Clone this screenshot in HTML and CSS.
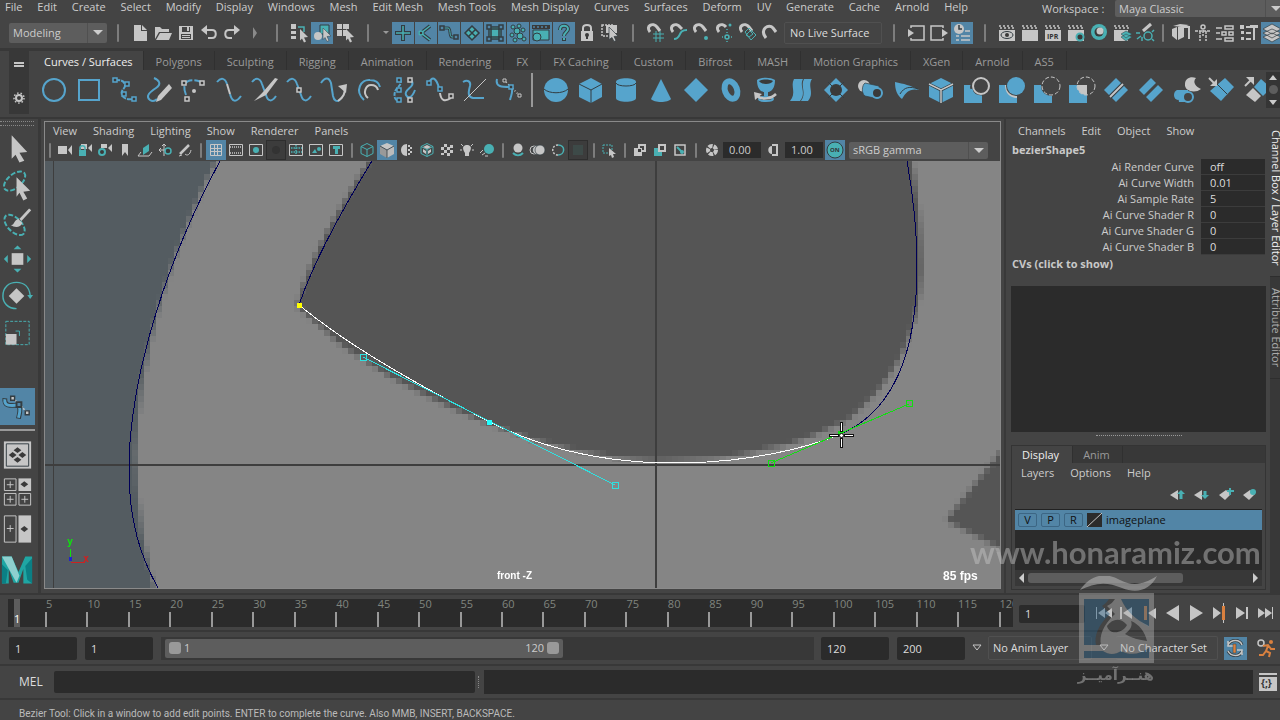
FILE: index.html
```html
<!DOCTYPE html>
<html lang="en">
<head>
  <meta charset="UTF-8">
  <meta name="viewport" content="width=device-width, initial-scale=1.0">
  <title>Maya Classic</title>
  <link rel="stylesheet" href="styles.css">
</head>
<body>

<header class="menubar">
  <nav class="menus">
    <a href="#">File</a><a href="#">Edit</a><a href="#">Create</a><a href="#">Select</a><a href="#">Modify</a><a href="#">Display</a><a href="#">Windows</a><a href="#">Mesh</a><a href="#">Edit Mesh</a><a href="#">Mesh Tools</a><a href="#">Mesh Display</a><a href="#">Curves</a><a href="#">Surfaces</a><a href="#">Deform</a><a href="#">UV</a><a href="#">Generate</a><a href="#">Cache</a><a href="#">Arnold</a><a href="#">Help</a>
  </nav>
  <label for="workspace">Workspace :</label>
  <div class="drop workspace"><select id="workspace"><option>Maya Classic</option></select><span class="caret"></span></div>
</header>

<!-- status line -->
<div class="statusline">
  <div class="drop mode"><select aria-label="Menu set"><option>Modeling</option></select><span class="caret"></span></div>
  <span class="sep"></span>
  <button aria-label="New scene"><svg viewBox="0 0 22 22"><path class="fw" d="M5 3h7v6h6v10H5zM13 3l5 5h-5z"/></svg></button>
  <button aria-label="Open scene"><svg viewBox="0 0 22 22"><path class="fw" d="M3 17V5h5l2 2h7v3H7zM4 18l4-7h12l-3 7z"/></svg></button>
  <button aria-label="Save scene"><svg viewBox="0 0 22 22"><path class="fw" fill-rule="evenodd" d="M4 4h14v14H4zM7 5v5h8V5zM6 12v5h10v-5z"/><path class="fw" d="M12 5h2v4h-2zM7 13h8v1H7zM7 15h8v1H7z"/></svg></button>
  <button aria-label="Undo"><svg viewBox="0 0 22 22"><path class="sw" stroke-width="2" d="M6 8h8c5 0 5 8 0 8h-4"/><path class="fw" d="M3 8l6-5v10z"/></svg></button>
  <button aria-label="Redo"><svg viewBox="0 0 22 22"><path class="sw" stroke-width="2" d="M16 8H8c-5 0-5 8 0 8h3"/><path class="fw" d="M19 8l-6-5v10z"/></svg></button>
  <span class="sep arrow"></span>
  <span class="sep"></span>
  <button aria-label="Select by hierarchy"><svg viewBox="0 0 22 22"><path class="fw" d="M3 2h5v5H3zM3 9h5v3H3zM3 14h5v3H3z"/><path class="st" d="M10 5h6v5"/><path class="fw" d="M12 7l8 8-4 .5 2 4-2 1-2-4-2 2z"/></svg></button>
  <button class="on" aria-label="Select by object"><svg viewBox="0 0 22 22"><path class="ft sd" stroke-width="1" d="M9 3h9v9H9z"/><circle class="fw" cx="7" cy="14" r="4"/><path class="fw sd" stroke-width=".5" d="M12 6l8 8-4 .5 2 4-2 1-2-4-2 2z"/></svg></button>
  <button aria-label="Select by component"><svg viewBox="0 0 22 22"><path class="fw" d="M3 2h5v5H3zM9 2h6v5H9zM3 8h5v6H3zM9 8h3v6H9z"/><path class="fw" d="M12 7l8 8-4 .5 2 4-2 1-2-4-2 2z"/></svg></button>
  <span class="sep"></span>
  <span class="tiny"></span>
  <button class="on" aria-label="Handles mask"><svg viewBox="0 0 22 22"><path class="sd" stroke-width="4" d="M11 3v16M3 11h16"/><path class="st" d="M11 4v14M4 11h14"/></svg></button>
  <button class="on" aria-label="Joints mask"><svg viewBox="0 0 22 22"><path class="sd" stroke-width="3.5" d="M15 4L6 11l9 7"/><path class="st" d="M15 4L6 11l9 7"/><circle class="fd st" cx="6" cy="11" r="2"/></svg></button>
  <button class="on" aria-label="Curves mask"><svg viewBox="0 0 22 22"><path class="sd" stroke-width="3" d="M5 6h5c3 0 1 9 4 9h3"/><path class="st" stroke-width="1" d="M5 6h5c3 0 1 9 4 9h3"/><path class="fa sd" d="M2 4h4v4H2zM16 13h4v4h-4z"/></svg></button>
  <button class="on" aria-label="Surfaces mask"><svg viewBox="0 0 22 22"><path class="ft sd" d="M11 4l7 7-7 7-7-7z"/><path class="sd" d="M7 7l8 8M15 7l-8 8"/></svg></button>
  <button class="on" aria-label="Deformations mask"><svg viewBox="0 0 22 22"><path class="ft sd" d="M7 7h8v8H7zM5 5h12v12H5z"/><path class="fa sd" d="M3 3h4v4H3zM15 3h4v4h-4zM3 15h4v4H3zM15 15h4v4h-4z"/></svg></button>
  <button class="on" aria-label="Dynamics mask"><svg viewBox="0 0 22 22"><g class="ft sd" stroke-width="1"><circle cx="6" cy="5" r="2"/><circle cx="12" cy="4" r="2"/><circle cx="16" cy="8" r="2"/><circle cx="10" cy="9" r="3"/><circle cx="5" cy="13" r="2"/><circle cx="13" cy="14" r="3"/><circle cx="17" cy="17" r="2"/><circle cx="8" cy="18" r="2"/></g></svg></button>
  <button class="on" aria-label="Rendering mask"><svg viewBox="0 0 22 22"><path class="ft sd" stroke-width="1" d="M3 8h16v10H3z"/><path class="fd" d="M2 3h18v4H2z"/><path class="sa" stroke-dasharray="2 2" d="M3 5h16"/><circle class="ft sd" stroke-width="1" cx="7" cy="15" r="4"/></svg></button>
  <button class="on" aria-label="Miscellaneous mask"><svg viewBox="0 0 22 22"><path class="sd" stroke-width="4" d="M7 8c0-6 8-5 8-1 0 3-4 3-4 7M11 16v3"/><path class="st" stroke-width="2" d="M7 8c0-6 8-5 8-1 0 3-4 3-4 7M11 16v2"/></svg></button>
  <button aria-label="Lock selection"><svg viewBox="0 0 22 22"><path class="sw" stroke-width="2" d="M7 10V6c0-4 8-4 8 0v4"/><path class="fw" d="M5 9h12v10H5z"/><circle class="fd" cx="11" cy="13" r="2"/><path class="fd" d="M10 13h2v4h-2z"/></svg></button>
  <button aria-label="Highlight selection"><svg viewBox="0 0 22 22"><path class="sw" stroke-dasharray="2 1" d="M3 3h11v11H3z"/><path class="fw" d="M7 3h11v8H7z"/><path class="fw sd" stroke-width=".7" d="M10 5l9 9-4 .5 2 4-2 1-2-4-3 2z"/></svg></button>
  <span class="sep"></span>
  <button aria-label="Snap to grids"><svg viewBox="0 0 22 22"><path class="sw" stroke-width="3" d="M6 10C1 4 9 0 13 5l3 4"/><path class="st" stroke-width="1" d="M9 12h11M9 16h11M12 9v11M16 9v11"/></svg></button>
  <button aria-label="Snap to curves"><svg viewBox="0 0 22 22"><path class="sw" stroke-width="3" d="M6 10C1 4 9 0 13 5l2 2"/><path class="st" stroke-width="2" d="M7 17c8 0 3-9 13-9"/></svg></button>
  <button aria-label="Snap to points"><svg viewBox="0 0 22 22"><path class="sw" stroke-width="3" d="M6 10C1 4 9 0 13 5l3 4"/><circle class="ft" cx="16" cy="16" r="2"/></svg></button>
  <button aria-label="Snap to projected center"><svg viewBox="0 0 22 22"><path class="sw" stroke-width="3" d="M6 10C1 4 9 0 13 5"/><circle class="st" cx="14" cy="15" r="2"/><circle class="ft" cx="17" cy="3" r="1.5"/><path class="st" stroke-dasharray="1 2" d="M14 7v14M9 15h11"/></svg></button>
  <button aria-label="Snap to view planes"><svg viewBox="0 0 22 22"><path class="sw" stroke-width="3" d="M6 10C1 4 9 0 13 5l3 4"/><path class="st" stroke-width="1" d="M9 10l4-4 7 7-5 5zM10 13l4-4 3 3-4 3z"/></svg></button>
  <button aria-label="Make live"><svg viewBox="0 0 22 22"><path class="sw" stroke-width="3" d="M7 16C0 7 10 1 14 6l3 4"/></svg></button>
  <input class="live" type="text" aria-label="Live surface" value="No Live Surface">
  <span class="sep"></span>
  <button aria-label="Inputs"><svg viewBox="0 0 22 22"><path class="sw" d="M6 6V4h13v14H6v-2"/><path class="fw" d="M3 7l6 4-6 4z"/></svg></button>
  <button aria-label="Outputs"><svg viewBox="0 0 22 22"><path class="sw" d="M15 6V4H3v14h12v-2"/><path class="fw" d="M14 7l6 4-6 4z"/></svg></button>
  <button class="on" aria-label="Construction history"><svg viewBox="0 0 22 22"><circle class="fw" cx="8" cy="7" r="5"/><path class="sd" d="M8 3v4h3"/><path class="sw" d="M14 9h5M5 14h3M10 14h9M5 18h3M10 18h9"/></svg></button>
  <span class="sep"></span>
  <button aria-label="Render view"><svg viewBox="0 0 22 22"><path class="sw" stroke-dasharray="2 2" d="M3 4h16M4 6h15"/><path class="fw" d="M3 8h16v11H3z"/><ellipse class="sd" stroke-width="1" cx="11" cy="13" rx="6" ry="3.5"/><circle class="fd" cx="11" cy="13" r="2"/></svg></button>
  <button aria-label="Render current frame"><svg viewBox="0 0 22 22"><path class="sw" stroke-dasharray="2 2" d="M3 4h16M4 6h15"/><path class="fw" d="M3 8h16v11H3z"/></svg></button>
  <button aria-label="IPR render"><svg viewBox="0 0 22 22"><path class="sw" stroke-dasharray="2 2" d="M3 4h16M4 6h15"/><path class="fw" d="M3 8h16v11H3z"/><text class="ipr" x="5" y="17">IPR</text></svg></button>
  <button aria-label="Render settings"><svg viewBox="0 0 22 22"><path class="sw" stroke-dasharray="2 2" d="M3 4h16M4 6h15"/><path class="fw" d="M3 8h16v11H3z"/><circle class="fd st" stroke-width="2" cx="15" cy="15" r="3.5"/></svg></button>
  <button aria-label="Hypershade"><svg viewBox="0 0 22 22"><circle class="ft" cx="11" cy="10" r="8"/><circle class="fd" cx="11" cy="10" r="4.5"/><circle class="fw" cx="12" cy="9" r="3.5"/></svg></button>
  <button aria-label="Render setup"><svg viewBox="0 0 22 22"><path class="sw" stroke-dasharray="2 2" d="M3 4h16M4 6h15"/><path class="fw" d="M3 8h14v11H3z"/><path class="ft sd" stroke-width=".5" d="M10 15l5-3 6 3-6 4zM10 12l5-3 6 3-6 4z"/></svg></button>
  <button aria-label="Light editor"><svg viewBox="0 0 22 22"><path class="sw" stroke-width="3" d="M9 9l8-7"/><path class="st" d="M2 11h4M3 17l4-3M8 19v-4"/><circle class="st" cx="14" cy="14" r="4"/><path class="st" d="M18 10l2-2M18 17l2 2"/></svg></button>
  <span class="sep narrow"></span>
  <button aria-label="Modeling toolkit"><svg viewBox="0 0 22 22"><path class="fw" d="M3 7l5-2v13l-5-4zM9 5l6-2v12l-6 3zM4 4l7-2 9 1-5 2z"/><path class="sw" stroke-width="2" d="M15 5h5v12"/></svg></button>
  <button aria-label="HumanIK"><svg viewBox="0 0 22 22"><circle class="sw" cx="11" cy="5" r="2"/><path class="sw" stroke-dasharray="3 1" d="M3 9h16M8 9v10M14 9v10M11 8v6"/></svg></button>
  <button aria-label="Attribute editor"><svg viewBox="0 0 22 22"><path class="sw" d="M10 4h8v3h-8zM7 10h4v3H7zM14 10h4v3h-4zM10 16h8v3h-8zM1 6h6M1 11h4M1 17h6"/></svg></button>
  <button aria-label="Tool settings"><svg viewBox="0 0 22 22"><path class="fw" d="M2 3h4v4H2zM3 9h3v3H3zM3 15h3v3H3zM12 3h8v3h-8z"/><path class="sw" stroke-width="2" d="M8 5h6M8 11h5M8 17h5M16 5v13"/></svg></button>
  <button class="on" aria-label="Channel box"><svg viewBox="0 0 22 22"><path class="fw sd" stroke-width=".7" d="M2 15l9-4 9 4-9 5zM2 11l9-4 9 4-9 5zM2 7l9-5 9 5-9 5z"/></svg></button>
</div>

<!-- shelf -->
<section class="shelf">
  <div class="shelf-side">
    <button aria-label="Shelf tabs"><svg viewBox="0 0 20 20"><path class="sw" stroke-width="2" d="M5 7h10M5 10h10"/></svg></button>
    <button aria-label="Shelf settings"><svg viewBox="0 0 20 20"><circle class="sw" stroke-width="2" cx="10" cy="9" r="3"/><circle class="sw" stroke-dasharray="1.5 2" cx="10" cy="9" r="5"/></svg></button>
  </div>
  <div class="shelf-body">
    <div class="tabs">
      <button class="tab active">Curves / Surfaces</button><button class="tab">Polygons</button><button class="tab">Sculpting</button><button class="tab">Rigging</button><button class="tab">Animation</button><button class="tab">Rendering</button><button class="tab">FX</button><button class="tab">FX Caching</button><button class="tab">Custom</button><button class="tab">Bifrost</button><button class="tab">MASH</button><button class="tab">Motion Graphics</button><button class="tab">XGen</button><button class="tab">Arnold</button><button class="tab">AS5</button>
    </div>
    <div class="shelf-row">
      <div class="shelf-icons">
        <button aria-label="NURBS circle"><svg viewBox="0 0 32 32"><circle class="sb" stroke-width="2" cx="16" cy="16" r="11"/></svg></button>
        <button aria-label="NURBS square"><svg viewBox="0 0 32 32"><path class="sb" stroke-width="2" d="M6 6h20v20H6z"/></svg></button>
        <button aria-label="EP curve tool"><svg viewBox="0 0 32 32"><path class="sb" stroke-width="2" stroke-dasharray="5 1" d="M7 6c5 0 9 0 10 5 1 4-5 4-3 10 1 3 5 5 11 4"/><path class="fd sb" d="M5 4h4v4H5zM17 8h4v4h-4zM14 18h4v4h-4zM24 23h4v4h-4z"/></svg></button>
        <button aria-label="Pencil curve tool"><svg viewBox="0 0 32 32"><path class="sb" stroke-width="2" d="M11 4c5 2 8 6 2 10s-11 8-6 12c3 2 5 1 7-1"/><path class="fw" d="M13 28l2-6L26 10l3 4-11 12z"/></svg></button>
        <button aria-label="Three point arc"><svg viewBox="0 0 32 32"><path class="sb" stroke-width="2" stroke-dasharray="9 2" d="M8 21c-6-15 5-17 15-13"/><path class="fd sw" d="M4 7h4v4H4zM22 7h4v4h-4zM7 23h4v4H7z"/><circle class="fw" cx="16" cy="17" r="2"/></svg></button>
        <button aria-label="Attach curves"><svg viewBox="0 0 32 32"><path class="sb" stroke-width="2" d="M4 8c4-5 8-4 10 2M17 20c2 8 6 9 11 2"/><path class="sw" stroke-width="2" d="M14 10l3 10"/></svg></button>
        <button aria-label="Detach curves"><svg viewBox="0 0 32 32"><path class="sb" stroke-width="2" d="M4 8c4-5 8-4 10 2l4 11c2 7 6 7 10 1"/><path class="fw" d="M6 27l9-9L27 4l3 1-12 16z"/></svg></button>
        <button aria-label="Insert knot"><svg viewBox="0 0 32 32"><path class="sb" stroke-width="2" d="M4 8c4-5 8-4 10 2l4 11c2 7 6 7 10 1"/><path class="fd sw" d="M14 14h4v4h-4z"/></svg></button>
        <button aria-label="Extend curve"><svg viewBox="0 0 32 32"><path class="sb" stroke-width="2" d="M3 9c4-6 8-6 10 0l2 13c1 5 4 6 7 4"/><path class="sw" stroke-width="2" d="M20 27c6-4 7-8 7-14"/><path class="fw" d="M20 12l9-2-1 9z"/></svg></button>
        <button aria-label="Offset curve"><svg viewBox="0 0 32 32"><path class="sb" stroke-width="2" d="M11 26C1 17 8 5 17 6c6 0 9 3 10 7"/><path class="sw" stroke-width="2" d="M15 24c-6-5-2-13 3-13 4 0 6 1 7 5"/></svg></button>
        <button aria-label="Rebuild curve"><svg viewBox="0 0 32 32"><path class="sb" stroke-width="2" stroke-dasharray="4 1" d="M12 5c4 8-8 8-5 19 1 3 3 2 4 2"/><path class="sb" stroke-width="2" d="M23 6c6 7-8 9-5 15 2 4 6 3 9-5"/><path class="fd sb" d="M9 4h4v4H9zM9 14h4v4H9zM9 24h4v4H9z"/><path class="fd sw" d="M20 4h4v4h-4zM20 24h4v4h-4z"/></svg></button>
        <button aria-label="Add points"><svg viewBox="0 0 32 32"><path class="sb" stroke-width="2" d="M6 9c3-7 7-6 10 5"/><path class="sw" stroke-width="2" d="M17 19c1 8 5 9 11 5"/><path class="fd sb" d="M4 7h4v4H4zM15 13h4v4h-4z"/><path class="fd sw" d="M26 20h4v4h-4z"/></svg></button>
        <button aria-label="Project tangent"><svg viewBox="0 0 32 32"><path class="sb" stroke-width="2" d="M5 8c5-3 8 0 7 4-2 7-2 11 3 12h11"/><path class="sw" stroke-width="1" d="M6 27L28 5"/></svg></button>
        <button aria-label="Bezier curve tool"><svg viewBox="0 0 32 32"><path class="sb" stroke-width="2" d="M4 5c-2 8 5 8 14 8 3 4 0 8-1 13"/><path class="sw" stroke-dasharray="1 2" d="M11 6l7 7 9 9"/><path class="fd sb" d="M16 11h4v4h-4z"/><path class="fd sw" stroke-width="1" d="M10 5h3v3h-3zM25 20h3v3h-3z"/></svg></button>
        <span class="bar"></span>
        <button aria-label="Sphere"><svg viewBox="0 0 32 32"><circle class="fb" cx="16" cy="16" r="12"/><path class="sd" stroke-width="1" d="M4 15c5 5 19 5 24 0"/></svg></button>
        <button aria-label="Cube"><svg viewBox="0 0 32 32"><path class="fb" d="M16 4l11 6v13l-11 6-12-6V10z"/><path class="sd" stroke-width="1" d="M4 10l12 6 11-6M16 16v13"/></svg></button>
        <button aria-label="Cylinder"><svg viewBox="0 0 32 32"><path class="fb" d="M6 8c0-5 20-5 20 0v16c0 5-20 5-20 0z"/><path class="sd" stroke-width="1" d="M6 9c1 4 19 4 20 0"/></svg></button>
        <button aria-label="Cone"><svg viewBox="0 0 32 32"><path class="fb" d="M16 5l10 20c-3 4-17 4-20 0z"/></svg></button>
        <button aria-label="Plane"><svg viewBox="0 0 32 32"><path class="fb" d="M16 4l12 12-12 12L4 16z"/></svg></button>
        <button aria-label="Torus"><svg viewBox="0 0 32 32"><ellipse class="sb" stroke-width="6" cx="16" cy="16" rx="6" ry="9" transform="rotate(-20 16 16)"/></svg></button>
        <button aria-label="Revolve"><svg viewBox="0 0 32 32"><path class="fb" d="M7 6c0 12 7 12 7 12v4h4v-4s7 0 7-12c-5-3-13-3-18 0z"/><path class="fd" d="M9 7c4-2 10-2 14 0-1 2-4 3-7 3s-6-1-7-3z"/><ellipse class="sb" stroke-width="2" cx="16" cy="25" rx="7" ry="2"/><path class="sw" stroke-width="2.5" d="M7 22c5 4 14 3 19-2"/><path class="fw" d="M4 18l8 2-7 6z"/></svg></button>
        <button aria-label="Loft"><svg viewBox="0 0 32 32"><path class="fb" d="M9 5h9c-4 7 4 14-3 22H5c7-8 0-15 4-22zM19 5h8c-5 7 3 14-4 22h-7c6-8-1-15 3-22z"/></svg></button>
        <button aria-label="Planar"><svg viewBox="0 0 32 32"><path class="fb" d="M16 4l12 12-12 12L4 16z"/><circle class="fd" cx="16" cy="16" r="6"/><path class="sd" stroke-width="1" d="M8 8l4 4M24 8l-4 4M8 24l4-4M24 24l-4-4"/></svg></button>
        <button aria-label="Extrude"><svg viewBox="0 0 32 32"><circle class="fw" cx="9" cy="12" r="6"/><path class="fb sd" stroke-width=".7" d="M10 9l14 3v13l-14-3c-4-3-3-11 0-13z"/><circle class="fd sb" stroke-width="2" cx="22" cy="19" r="5"/></svg></button>
        <button aria-label="Birail"><svg viewBox="0 0 32 32"><path class="fb" d="M5 8c9 2 15 3 24 8-9-2-13 2-17 9-5-4-7-9-7-17z"/><path class="sd" stroke-width="1" d="M10 20c4-7 10-8 18-5"/></svg></button>
        <button aria-label="Bevel"><svg viewBox="0 0 32 32"><path class="fb" d="M16 4l12 6v13l-12 6-12-6V10z"/><path class="sd" stroke-width="3" d="M4 10l12 6 12-6M16 16v13"/><path class="sw" d="M4 10l12 6 12-6M16 16v13"/></svg></button>
        <button aria-label="Project curve"><svg viewBox="0 0 32 32"><path class="fb" d="M4 11h18v18H4z"/><circle class="fs" cx="20" cy="13" r="10"/><circle class="sw" stroke-width="2" cx="21" cy="12" r="8"/><path class="sb" stroke-width="3" d="M11 15c1 5 5 8 11 8"/></svg></button>
        <button aria-label="Boolean union"><svg viewBox="0 0 32 32"><path class="fb" d="M4 11h18v18H4z"/><path class="fw" d="M10 11h3c0 6 4 10 9 10v3c-7 0-12-5-12-13z"/><circle class="fs" cx="21" cy="12" r="10"/><circle class="fb" cx="21" cy="12" r="9"/></svg></button>
        <button aria-label="Boolean difference"><svg viewBox="0 0 32 32"><path class="fb" d="M4 11h18v18H4z"/><circle class="fs" cx="21" cy="12" r="10"/><circle class="sw" stroke-width="1" stroke-dasharray="4 2" cx="21" cy="12" r="9"/></svg></button>
        <button aria-label="Boolean intersection"><svg viewBox="0 0 32 32"><path class="fb" d="M4 11h18v18H4z"/><path class="fw" d="M12 11h10v10c-6 0-10-4-10-10z"/><circle class="sw" stroke-width="1" stroke-dasharray="4 2" cx="21" cy="12" r="9"/></svg></button>
        <button aria-label="Attach surfaces"><svg viewBox="0 0 32 32"><path class="fb" d="M16 4l12 12-12 12L4 16z"/><path class="sd" stroke-width="4" d="M10 23L23 10"/><path class="sw" stroke-width="2" d="M10 23L23 10"/></svg></button>
        <button aria-label="Detach surfaces"><svg viewBox="0 0 32 32"><path class="fb" d="M16 4l12 12-12 12L4 16z"/><path class="ss" stroke-width="3" d="M8 24L24 8"/></svg></button>
        <button aria-label="Surface fillet"><svg viewBox="0 0 32 32"><path class="fw" d="M15 10c0-6 6-8 11-6-4 4 0 9 5 11-6 5-17 2-16-5z"/><path class="fb" d="M7 16h11v12H9z"/><ellipse class="fb" cx="8" cy="21" rx="4" ry="5"/><circle class="fs sb" stroke-width="2" cx="18" cy="23" r="5"/></svg></button>
        <button aria-label="Open surface"><svg viewBox="0 0 32 32"><path class="fb" d="M20 4l9 9-13 14-11-10z"/><path class="sd" stroke-width="1" d="M12 10l10 10"/><path class="sw" stroke-width="2" d="M4 4l6 6"/><path class="fw" d="M12 5v7H5z"/></svg></button>
        <button aria-label="Extend surface"><svg viewBox="0 0 32 32"><path class="fb" d="M21 5l10 9-8 8-9-9z"/><path class="fw" d="M13 14l8 8-6 6-9-7z"/><path class="sw" stroke-width="2" d="M5 12l6-6"/><path class="fw" d="M6 3h8v8z"/></svg></button>
      </div>
      <div class="shelf-scroll"><span class="up"></span><span class="dot"></span><span class="down"></span></div>
    </div>
  </div>
</section>

<main>
  <aside class="toolbox">
    <span class="grip"></span>
    <button aria-label="Select"><svg viewBox="0 0 36 36"><path class="fw" d="M12 5l16 17-8 1 5 8-5 2-4-8-4 4z"/></svg></button>
    <button aria-label="Lasso"><svg viewBox="0 0 36 36"><ellipse class="st" stroke-width="2" stroke-dasharray="5 2" cx="15" cy="14" rx="13" ry="7" transform="rotate(-40 15 14)"/><path class="fw" d="M17 10l14 14-7 1 4 7-4 2-4-8-3 4z"/></svg></button>
    <button aria-label="Paint selection"><svg viewBox="0 0 36 36"><ellipse class="st" stroke-width="2" stroke-dasharray="5 2" cx="15" cy="21" rx="13" ry="7" transform="rotate(45 15 21)"/><path class="fw" d="M11 21c4 1 3-5 8-6l4 4c-2 5-8 5-12 2z"/><path class="sw" stroke-width="3" d="M21 16l10-11"/></svg></button>
    <button aria-label="Move"><svg viewBox="0 0 36 36"><path class="fw" d="M12 12h12v12H12z"/><path class="ft" d="M18 4l4 4h-8zM18 32l4-4h-8zM4 18l4-4v8zM32 18l-4-4v8z"/></svg></button>
    <button aria-label="Rotate"><svg viewBox="0 0 36 36"><path class="fw" d="M17 10l8 8-8 8-8-8z"/><path class="st" d="M17 31C8 31 3 25 3 18 3 9 9 4 17 4c8 0 13 5 14 13"/><path class="ft" d="M28 17h6l-3 4z"/></svg></button>
    <button aria-label="Scale"><svg viewBox="0 0 36 36"><path class="st" stroke-width="1" stroke-dasharray="3 1.5" d="M6 6h24v24H6z"/><path class="fw" d="M6 19h11v11H6z"/><path class="st" stroke-width="1" d="M16 16h4v5"/></svg></button>
    <span class="tool-space"></span>
    <button class="on" aria-label="Bezier curve tool"><svg viewBox="0 0 36 36"><path class="sd" stroke-width="5" d="M5 9c-1 8 5 8 14 7 3 4 1 8 0 14"/><path class="sb" stroke-width="3" d="M5 10c-1 7 5 7 14 6 3 4 1 8 0 13"/><path class="sw" stroke-dasharray="2 1" d="M13 9l7 6 8 9"/><path class="fa sd" stroke-width="2" d="M17 13h5v5h-5z"/><path class="fw sd" d="M11 7h4v4h-4zM26 22h4v4h-4z"/></svg></button>
    <hr>
    <button aria-label="Single view"><svg viewBox="0 0 36 36"><path class="fw" d="M4 4h28v28H4z"/><path class="sd" stroke-width="1" d="M6.500 6.500h23v23h-23z"/><path class="fd" d="M18 10l4 3-4 3-4-3zM13 15l4 3-4 3-4-3zM23 15l4 3-4 3-4-3zM18 20l4 3-4 3-4-3z"/></svg></button>
    <button aria-label="Four views"><svg viewBox="0 0 36 36"><path class="fw" d="M19 4h13v13H19z"/><path class="sw" stroke-width="1" d="M4.500 4.500h12v12h-12zM4.500 19.500h12v12h-12zM19.500 19.500h12v12h-12zM10.500 7v7M7 10.500h7M10.500 22v7M7 25.500h7M25.500 22v7M22 25.500h7"/><path class="fd" d="M25 7l4 3-4 3-4-3z"/></svg></button>
    <button aria-label="Two views"><svg viewBox="0 0 36 36"><path class="fw" d="M19 4h13v28H19z"/><path class="sw" stroke-width="1" d="M4.500 4.500h12v27h-12zM10.500 14v7M7 17.500h7"/><path class="fd" d="M25 15l4 3-4 3-4-3z"/></svg></button>
    <div class="logo"><svg viewBox="0 0 36 32"><path fill="#1fa6a3" d="M2 2h10l7 16 7-16h7v28H24V15l-5 14h-5L9 15v15H2z"/><path fill="#8ed0cf" d="M2 2h10l8 20-3 7z"/><path fill="#0b7f84" d="M2 10l6 6-2 14H2zM26 12l7-8v26l-5-4z"/></svg></div>
  </aside>

  <section class="viewport">
    <nav class="panel-menus"><a href="#">View</a><a href="#">Shading</a><a href="#">Lighting</a><a href="#">Show</a><a href="#">Renderer</a><a href="#">Panels</a></nav>
    <div class="panel-tools">
      <span class="sep"></span>
      <button aria-label="Select camera"><svg viewBox="0 0 20 20"><path class="fw" d="M3 6h9v8H3zM17 5v10l-4-5z"/></svg></button>
      <button aria-label="Lock camera"><svg viewBox="0 0 20 20"><path class="fw" d="M6 4h6v5H6zM17 4v8l-4-4z"/><path class="st" d="M5 10V8c0-3 5-3 5 0v2"/><path class="ft" d="M4 10h7v6H4z"/></svg></button>
      <button aria-label="Camera attributes"><svg viewBox="0 0 20 20"><path class="fw" d="M6 4h6v4H6zM17 4v8l-4-4z"/><circle class="fd st" stroke-width="2" cx="7" cy="12" r="3"/></svg></button>
      <button aria-label="Bookmarks"><svg viewBox="0 0 20 20"><path class="fw" d="M7 4h6v12l-3-4-3 4z"/></svg></button>
      <button aria-label="Image plane"><svg viewBox="0 0 20 20"><path class="ft" d="M8 8l6-4v7l-6 4z"/><path class="sw" stroke-width="1" d="M6 12l-3 4h11l3-4"/></svg></button>
      <button aria-label="Pan and zoom"><svg viewBox="0 0 20 20"><path class="sw" stroke-width="1" d="M9 4v12M4 10h9M7 6l2-2 2 2M6 8l-2 2 2 2"/><circle class="fd st" cx="13" cy="11" r="3"/></svg></button>
      <button aria-label="Grease pencil"><svg viewBox="0 0 20 20"><path class="sw" stroke-width="2.500" d="M5 14l9-9"/><path class="sw" stroke-width="1" d="M4 16l3-1M10 14c2 2 5 1 6-4"/></svg></button>
      <span class="sep"></span>
      <button class="on" aria-label="Grid"><svg viewBox="0 0 20 20"><path class="sw" stroke-width="1" d="M4.500 4.500h11v11h-11zM8.500 4v12M11.500 4v12M4 8.500h12M4 11.500h12"/></svg></button>
      <button aria-label="Film gate"><svg viewBox="0 0 20 20"><path class="sw" stroke-width="1" d="M3.500 4.500h13v11h-13z"/><path class="sw" stroke-dasharray="1 1" d="M4 7h13M4 13h13"/></svg></button>
      <button aria-label="Resolution gate"><svg viewBox="0 0 20 20"><path class="sw" stroke-width="1" d="M3.500 4.500h13v11h-13z"/><circle class="ft" cx="10" cy="10" r="3"/></svg></button>
      <button class="pressed" aria-label="Gate mask"><svg viewBox="0 0 20 20"><circle class="fg" cx="10" cy="10" r="4"/></svg></button>
      <button aria-label="Field chart"><svg viewBox="0 0 20 20"><path class="sw" stroke-width="1" d="M3.500 4.500h13v11h-13z"/><path class="st" stroke-dasharray="1.500 1" d="M5 8h11M5 12h11M10 5v10"/></svg></button>
      <button aria-label="Safe action"><svg viewBox="0 0 20 20"><path class="sw" stroke-width="1" d="M3.500 4.500h13v11h-13z"/><path class="ft" d="M6 13l3-4 2 4z"/><circle class="ft" cx="13" cy="9" r="2"/></svg></button>
      <button aria-label="Safe title"><svg viewBox="0 0 20 20"><path class="sw" stroke-width="1" d="M3.500 4.500h13v11h-13z"/><path class="ft" d="M7 6h7v3h-2v5H9V9H7z"/></svg></button>
      <span class="sep"></span>
      <button aria-label="Wireframe"><svg viewBox="0 0 20 20"><path class="st" stroke-width="1" d="M10 3.500l6 3v7l-6 3-6-3v-7zM4 6.500l6 3 6-3M10 9.500v7"/></svg></button>
      <button class="on" aria-label="Smooth shade"><svg viewBox="0 0 20 20"><path class="fw" d="M10 3l7 3-7 4-7-4z"/><path fill="#999" d="M3 6l7 4v8l-7-4z"/><path fill="#bbb" d="M17 6l-7 4v8l7-4z"/><path class="sd" stroke-width=".8" d="M3 6l7 4 7-4M10 10v8"/></svg></button>
      <button aria-label="Default material"><svg viewBox="0 0 20 20"><path class="fw" d="M10 4v12c-8 0-8-12 0-12zM11 5h2v2h-2zM13 7h2v2h-2zM11 9h2v2h-2zM13 11h2v2h-2zM11 13h2v2h-2z"/></svg></button>
      <button aria-label="Wireframe on shaded"><svg viewBox="0 0 20 20"><path class="st" stroke-width="1" d="M10 3.500l6 3v7l-6 3-6-3v-7zM4 6.500l6 3 6-3M10 9.500v7"/><path class="fw" d="M10 5l4 2-4 2-4-2zM6 9l3 2v3l-3-2zM14 9l-3 2v3l3-2z"/></svg></button>
      <button aria-label="Textured"><svg viewBox="0 0 20 20"><path class="fw" d="M7 4h3v3H7zM13 5h3v3h-3zM4 7h3v3H4zM10 7h3v3h-3zM7 10h3v3H7zM13 10h3v3h-3zM4 13h3v2H4zM10 13h3v3h-3z"/></svg></button>
      <button aria-label="Lights"><svg viewBox="0 0 20 20"><path class="fw" d="M8 13C4 7 7 5 10 5s6 2 2 8v3H8z"/><path class="sw" stroke-width="1" d="M3 10h2M15 10h2M4 4l2 2M16 4l-2 2"/></svg></button>
      <button aria-label="Shadows"><svg viewBox="0 0 20 20"><circle class="ft" cx="12" cy="9" r="5"/><path class="sw" stroke-width="1" d="M3 13l3-3M5 15l3-2M8 16h3"/></svg></button>
      <span class="sep"></span>
      <button aria-label="Ambient occlusion"><svg viewBox="0 0 20 20"><circle class="fw" cx="10" cy="8" r="4.500"/><path class="st" stroke-width="2" d="M5 13c3 3 7 3 10 0"/></svg></button>
      <button aria-label="Motion blur"><svg viewBox="0 0 20 20"><circle class="sw" stroke-width="1" cx="6" cy="10" r="4"/><circle class="fw sd" stroke-width=".7" cx="9" cy="10" r="4.500"/><circle class="fw sd" stroke-width=".7" cx="12" cy="10" r="5"/></svg></button>
      <button aria-label="Anti-aliasing"><svg viewBox="0 0 20 20"><path class="st" d="M10 5c8 0 7 10 0 10"/><path class="sw" stroke-dasharray="2 1.500" d="M10 5c-7 0-7 10 0 10"/></svg></button>
      <button class="pressed" aria-label="Depth of field"><svg viewBox="0 0 20 20"><path fill="#3d4a48" d="M5 5h10v10H5z"/></svg></button>
      <span class="sep"></span>
      <button aria-label="Isolate select"><svg viewBox="0 0 20 20"><path class="st" stroke-width="1" stroke-dasharray="2 1" d="M4 5h9v8H4z"/><path class="fw" d="M10 8l7 6h-3l1 3-2 1-1-3-2 1z"/></svg></button>
      <span class="sep"></span>
      <button aria-label="X-ray"><svg viewBox="0 0 20 20"><path class="fw" d="M4 8h8v8H4z"/><path class="sw" stroke-width="2" d="M9 5h6v6H9z"/><path class="fd" d="M8 9h3v3H8z"/></svg></button>
      <button aria-label="X-ray active components"><svg viewBox="0 0 20 20"><path class="ft" d="M4 8h4v4h4v4H4z"/><path class="sw" stroke-width="2" d="M9 5h6v6H9z"/></svg></button>
      <button aria-label="X-ray joints"><svg viewBox="0 0 20 20"><path class="sw" d="M5 5h10v10H5z"/><path class="st" stroke-width="2" d="M7 7l5 5"/><circle class="ft" cx="12" cy="12" r="2"/></svg></button>
      <span class="sep"></span>
      <button aria-label="Exposure"><svg viewBox="0 0 20 20"><circle class="sw" stroke-width="4" stroke-dasharray="4 1" cx="11" cy="10" r="4"/></svg></button>
      <input type="text" aria-label="Exposure value" value="0.00">
      <button aria-label="Gamma"><svg viewBox="0 0 20 20"><path class="fw" d="M9 6v8c-5 0-5-8 0-8z"/><path class="sw" stroke-width="2" d="M9 5h5v10H9"/></svg></button>
      <input type="text" aria-label="Gamma value" value="1.00">
      <button class="on" aria-label="Color management"><svg viewBox="0 0 20 20"><circle class="ft sd" stroke-width="1" cx="10" cy="10" r="8"/><text class="ipr small" x="5" y="12">ON</text></svg></button>
      <div class="drop view-transform"><select aria-label="View transform"><option>sRGB gamma</option></select><span class="caret"></span></div>
    </div>
    <div class="scene">
      <canvas id="plane" width="955" height="427"></canvas>
      <svg viewBox="45 161 955 427" preserveAspectRatio="xMinYMin slice">
        <g stroke="#3e3e3e" stroke-width="2" shape-rendering="crispEdges"><path d="M45 465H1000M656 161V588"/><path stroke-width="1" d="M53.500 161V588"/></g>
        <g stroke-width="1" shape-rendering="crispEdges">
          <path stroke="#000058" d="M220 161C172 250 129 370 129 470 129 520 140 556 158 588"/>
          <path stroke="#000058" d="M372 161C345 205 315 257 299 305M907 161C913 195 917 230 917 265 917 320 909 404 841 434"/>
          <path stroke="#fff" d="M299 305C320 322 363 357 490 422 616 486 771 463 841 434"/>
          <path stroke="#2fe0e0" d="M363 357L615 485M360.500 354.500h6v6h-6zM612.500 482.500h6v6h-6z"/>
          <path stroke="#10e010" d="M771 463L909 404M768.500 460.500h6v6h-6zM906.500 400.500h6v6h-6z"/>
        </g>
        <path fill="#ff0" d="M297 303h5v5h-5z"/><path fill="#2ff" d="M487 420h5v5h-5z"/><path fill="#10e010" d="M838 431h5v5h-5z"/>
        <path stroke="#111" stroke-width="3" d="M841.500 422v10M841.500 438v10M829 435.500h10M844 435.500h10"/>
        <path stroke="#fff" stroke-width="1" d="M841.500 423v8M841.500 439v8M830 435.500h8M845 435.500h8"/>
        <circle fill="#fff" stroke="#111" stroke-width="1" cx="841.500" cy="435.500" r="2"/>
        <path stroke="#10e010" stroke-width="1" d="M70.500 549v12"/><path stroke="#c22" stroke-width="1" d="M71 562.500h14"/><path fill="#22c" d="M69 557h3v4h-3z"/>
        <text class="axis" fill="#10e010" x="67" y="545">y</text><text class="axis" fill="#c22" x="83" y="562">x</text>
        <text class="hud" x="497" y="579">front -Z</text>
        <text class="hud big" x="943" y="580">85 fps</text>
      </svg>
    </div>
  </section>

  <aside class="channels">
    <nav class="panel-menus"><a href="#">Channels</a><a href="#">Edit</a><a href="#">Object</a><a href="#">Show</a></nav>
    <h2>bezierShape5</h2>
    <div class="attrs">
      <label for="a1">Ai Render Curve</label><input id="a1" type="text" value="off">
      <label for="a2">Ai Curve Width</label><input id="a2" type="text" value="0.01">
      <label for="a3">Ai Sample Rate</label><input id="a3" type="text" value="5">
      <label for="a4">Ai Curve Shader R</label><input id="a4" type="text" value="0">
      <label for="a5">Ai Curve Shader G</label><input id="a5" type="text" value="0">
      <label for="a6">Ai Curve Shader B</label><input id="a6" type="text" value="0">
    </div>
    <h2>CVs (click to show)</h2>
    <div class="history"></div>
    <div class="splitter"></div>
    <div class="layers">
      <div class="tabs"><button class="tab active">Display</button><button class="tab">Anim</button></div>
      <nav class="panel-menus"><a href="#">Layers</a><a href="#">Options</a><a href="#">Help</a></nav>
      <div class="layer-tools">
        <button aria-label="Move layer up"><svg viewBox="0 0 20 20"><path class="fw" d="M2 10l8-5v10z"/><path class="st" stroke-width="3" d="M13 14V8"/><path class="ft" d="M9 9l4-4 4 4z"/></svg></button>
        <button aria-label="Move layer down"><svg viewBox="0 0 20 20"><path class="fw" d="M2 10l8-5v10z"/><path class="st" stroke-width="3" d="M13 6v5"/><path class="ft" d="M9 10l4 4 4-4z"/></svg></button>
        <button aria-label="New layer"><svg viewBox="0 0 20 20"><path class="fw" d="M3 10l7-5 5 4-6 6z"/><path class="st" stroke-width="2" d="M14 3v7M11 6h7"/></svg></button>
        <button aria-label="New layer from selected"><svg viewBox="0 0 20 20"><path class="fw" d="M3 10l7-5 5 4-6 6z"/><circle class="ft" cx="13" cy="7" r="3"/></svg></button>
      </div>
      <div class="layer-list">
        <div class="layer"><button>V</button><button>P</button><button>R</button><svg class="swatch" viewBox="0 0 15 14"><path fill="#2b2b2b" d="M0 0h15v14H0z"/><path class="sw" stroke-width="1" d="M0 14L15 0"/></svg><span>imageplane</span></div>
        <div class="hscroll"><span class="left"></span><span class="track"><span class="thumb"></span></span><span class="right"></span></div>
      </div>
    </div>
  </aside>
  <div class="side-tabs"><button class="active">Channel Box / Layer Editor</button><button>Attribute Editor</button></div>
</main>

<footer>
  <div class="row time">
    <div class="timeline"><span class="now">1</span><div class="ticks" id="ticks"></div></div>
    <input class="frame" type="text" aria-label="Current time" value="1">
    <div class="playback">
      <button aria-label="Go to start"><svg viewBox="0 0 22 22"><path class="fw" d="M3 5h1v12H3zM5 11l7-5v10zM12 11l7-5v10z"/></svg></button>
      <button aria-label="Step back frame"><svg viewBox="0 0 22 22"><path class="fw" d="M4 5h2v12H4zM7 11l9-6v12z"/></svg></button>
      <button aria-label="Step back key"><svg viewBox="0 0 22 22"><path class="fo" d="M5 4h3v14H5z"/><path class="fw" d="M9 11l8-5v11z"/></svg></button>
      <button aria-label="Play backwards"><svg viewBox="0 0 22 22"><path class="fw" d="M4 11l13-8v16z"/></svg></button>
      <button aria-label="Play forwards"><svg viewBox="0 0 22 22"><path class="fw" d="M18 11L5 3v16z"/></svg></button>
      <button aria-label="Step forward key"><svg viewBox="0 0 22 22"><path class="fo" d="M14 4h3v14h-3z"/><path class="fw" d="M13 11L5 5v12zM15 1h1v3h-1zM15 18h1v3h-1z"/></svg></button>
      <button aria-label="Step forward frame"><svg viewBox="0 0 22 22"><path class="fw" d="M15 5h2v12h-2zM14 11L5 5v12z"/></svg></button>
      <button aria-label="Go to end"><svg viewBox="0 0 22 22"><path class="fw" d="M18 5h1v12h-1zM11 11L4 6v10zM18 11l-7-5v10z"/></svg></button>
    </div>
  </div>
  <div class="row range">
    <input class="frame" type="text" aria-label="Animation start" value="1">
    <input class="frame" type="text" aria-label="Range start" value="1">
    <div class="range-bar"><div class="range-thumb"><i></i><span>1</span><span class="end">120</span><i></i></div></div>
    <input class="frame" type="text" aria-label="Range end" value="120">
    <input class="frame" type="text" aria-label="Animation end" value="200">
    <span class="outline-caret"><svg viewBox="0 0 12 12"><path class="sw" stroke-width="1" d="M2 3h8L6 8z"/></svg></span>
    <select class="anim" aria-label="Animation layer"><option>No Anim Layer</option></select>
    <span class="outline-caret"><svg viewBox="0 0 12 12"><path class="sw" stroke-width="1" d="M2 3h8L6 8z"/></svg></span>
    <select class="charset" aria-label="Character set"><option>No Character Set</option></select>
    <button class="on loop" aria-label="Loop playback"><svg viewBox="0 0 22 22"><path class="sd" stroke-width="3" d="M4 8c3-6 12-6 14 0M4 14c3 6 12 6 14 0"/><path class="sw" d="M4 8c3-6 12-6 14 0M4 14c3 6 12 6 14 0M4 4v5h5M18 18v-5h-5"/><path class="fo sd" stroke-width=".5" d="M9 7h3v9H9z"/></svg></button>
    <button aria-label="Animation preferences"><svg viewBox="0 0 22 22"><circle class="sw" cx="6" cy="6" r="3"/><circle class="fo" cx="16" cy="5" r="2"/><path class="so" stroke-width="2" d="M8 9l5-1 3 4h4M13 9l-2 5 4 2-1 4M11 14l-3 4H4"/></svg></button>
  </div>
  <div class="row command">
    <label for="mel">MEL</label>
    <input id="mel" type="text" value="">
    <span class="grip-v"></span>
    <output class="result"></output>
    <button aria-label="Script editor"><svg viewBox="0 0 22 22"><path class="fw" d="M2 2h18v2H2zM2 6h18v14H2z"/><text class="ipr script" x="4" y="16">{;}</text></svg></button>
  </div>
  <div class="row help">Bezier Tool: Click in a window to add edit points. ENTER to complete the curve. Also MMB, INSERT, BACKSPACE.</div>
</footer>

<div class="watermark" aria-hidden="true">
  <span class="site">www.honaramiz.com</span>
  <svg viewBox="0 0 80 90" width="80" height="90">
    <path fill="#2a5f85" fill-opacity=".45" fill-rule="evenodd" d="M7 23h25c-2 3-4 5-7 7l8 8c-12 11-16 22-14 31H7zM44 23h28v28c-13-7-23-16-28-28zM7 75h19c6 4 12 4 18 0 10 5 19 3 28-3v10H7z"/>
    <path fill="#b0b0b0" fill-opacity=".45" fill-rule="evenodd" d="M2 17h75v70H2zM7 23v46h17c-2-9 2-20 14-31l-8-8c4-2 6-4 8-7zM44 23c5 12 15 21 28 27V23zM7 75v7h65V72c-9 6-18 8-28 3-6 4-12 4-18 0zM30 50c2 9 15 8 20-1-6-7-14-7-20 1zM48 58c7 4 14 6 22 7-2-9-8-17-16-20 2 5-1 9-6 13z"/>
    <path fill="#b0b0b0" fill-opacity=".6" d="M3 14C14-2 29-4 43 4c14 7 24 4 37-4-7 14-20 18-35 12C29 5 17 7 3 14z"/>
  </svg>
  <span class="brand" lang="fa" dir="rtl">هنــرآمیــز</span>
</div>

<script src="script.js"></script>
</body>
</html>
```
FILE: styles.css
```css
* { box-sizing: border-box; }
body {
  margin: 0;
  min-height: 100vh;
  display: flex;
  flex-direction: column;
  position: relative;
  overflow: hidden;
  background: #444;
  color: #ccc;
  font-family: "Open Sans", "Noto Sans", sans-serif;
  font-size: 11px;
  line-height: 16px;
}
a { color: inherit; text-decoration: none; }
button, input, select {
  font: inherit;
  color: inherit;
  border: 0;
  padding: 0;
  margin: 0;
  background: none;
  border-radius: 0;
  min-width: 0;
}
select { appearance: none; flex: 1; }
svg { display: block; fill: none; stroke-width: 1.5px; }

/* icon colours */
.fw { fill: #c6c6c6; }
.sw { stroke: #c6c6c6; }
.ft { fill: #49b0b3; }
.st { stroke: #49b0b3; }
.fb { fill: #56a4cc; }
.sb { stroke: #56a4cc; }
.fd { fill: #3a3a3a; }
.sd { stroke: #333d42; }
.fs { fill: #444; }
.ss { stroke: #444; }
.fa { fill: #5285a6; }
.sa { stroke: #5285a6; }
.fo { fill: #d9803f; }
.so { stroke: #d9803f; }
.fg { fill: #333; }
.ipr { font: bold 7px "Open Sans", sans-serif; fill: #333; }
.small { font-size: 6px; }
.script { font-size: 10px; }

.on { background: #5285a6; }
.pressed { background: #3c3c3c; box-shadow: inset 0 0 0 1px #2e2e2e; }

/* drop-downs */
.drop { display: flex; align-items: center; background: #5d5d5d; border-radius: 2px; }
.drop select { align-self: stretch; padding-left: 4px; }
.caret {
  width: 20px;
  align-self: stretch;
  display: grid;
  place-items: center;
  border-left: 1px solid #505050;
}
.caret::before { content: ""; border: 5px solid transparent; border-top-color: #ccc; border-bottom: 0; }

/* menu bar */
.menubar { display: flex; align-items: flex-start; height: 18px; line-height: 14px; }
.menus { display: flex; justify-content: space-between; width: 968px; padding-left: 5px; margin-right: 74px; flex: none; }
.workspace { flex: 1; height: 17px; margin-left: 16px; margin-right: -5px; }
.menubar label { white-space: nowrap; padding-top: 2px; width: 57px; }

/* status line */
.statusline {
  display: flex;
  align-items: center;
  height: 33px;
  padding: 0 0 1px 9px;
  border-bottom: 3px solid #383838;
}
.statusline > * { flex: none; }
.statusline button { width: 23px; height: 22px; border-right: 1px solid #444; }
.statusline svg { width: 22px; height: 22px; }
.mode { width: 98px; height: 20px; }
.sep { width: 22px; height: 20px; display: grid; place-items: center; }
.sep::before { content: ""; width: 2px; height: 18px; background: #7d7d7d; border-radius: 1px; }
.sep.arrow::before { width: 0; height: 0; background: none; border: 6px solid transparent; border-left: 4px solid #8a8a8a; border-right: 0; }
.sep.narrow { width: 12px; }
.tiny { width: 13px; display: grid; place-items: center; }
.tiny::before { content: ""; border: 3px solid transparent; border-top-color: #999; border-bottom: 0; }
.live { width: 98px; height: 22px; margin: 0 1px 0 2px; padding-left: 5px; border: 1px solid #505050; border-radius: 2px; color: #ddd; }

/* shelf */
.shelf { display: flex; height: 68px; border-bottom: 2px solid #383838; padding-left: 9px; }
.shelf-side { width: 20px; height: 63px; display: flex; flex-direction: column; justify-content: space-between; background: #383838; flex: none; padding: 4px 0; }
.shelf-side button { height: 22px; }
.shelf-side svg { width: 20px; height: 20px; }
.shelf-body { flex: 1; min-width: 0; margin-left: 3px; }
.tabs { display: flex; height: 19px; background: #383838; }
.tab { padding: 3px 12px 0; line-height: 16px; color: #9a9a9a; border-right: 1px solid #303030; white-space: nowrap; }
.tab.active { background: #444; color: #eee; padding-right: 10px; }
.shelf-row { display: flex; height: 45px; }
.shelf-icons { flex: 1; min-width: 0; display: flex; overflow: hidden; padding-left: 4px; }
.shelf-icons button { flex: none; width: 35px; height: 40px; display: grid; place-items: center; }
.shelf-icons svg { width: 32px; height: 32px; }
.bar { flex: none; width: 12px; display: grid; place-items: center; height: 40px; }
.bar::before { content: ""; width: 2px; height: 34px; background: #999; }
.shelf-scroll { width: 14px; height: 36px; margin-top: 2px; background: #353535; display: flex; flex-direction: column; align-items: center; justify-content: space-around; }
.up, .down { border: 4px solid transparent; }
.up { border-bottom: 5px solid #ccc; border-top: 0; }
.down { border-top: 5px solid #ccc; border-bottom: 0; }
.dot { width: 9px; height: 9px; border-radius: 50%; background: #5d5d5d; }

/* workspace */
main { flex: 1; display: flex; min-height: 0; }
.toolbox { width: 41px; flex: none; border-right: 3px solid #393939; }
.toolbox button { display: block; width: 35px; height: 37px; }
.toolbox svg { width: 35px; height: 36px; }
.grip { display: block; height: 5px; margin: 2px 4px 3px 0; border-top: 1px dotted #888; border-bottom: 1px dotted #888; }
.tool-space { display: block; height: 37px; }
.toolbox hr { width: 35px; height: 2px; margin: 4px 0 5px; border: 0; background: #999; }
.logo svg { width: 35px; height: 32px; }
.logo { margin-top: 7px; }

.viewport { flex: 1; min-width: 0; display: flex; flex-direction: column; margin: 2px 3px 4px; border: 1px solid #8a8a8a; }
.panel-menus { display: flex; gap: 16px; padding-left: 8px; height: 18px; line-height: 18px; }
.panel-tools { display: flex; align-items: center; height: 21px; padding-bottom: 1px; overflow: hidden; }
.panel-tools > * { flex: none; }
.panel-tools button { width: 20px; height: 20px; }
.panel-tools svg { width: 20px; height: 20px; }
.panel-tools .sep { width: 11px; }
.panel-tools .sep:first-child { width: 10px; }
.panel-tools .sep::before { height: 15px; }
.panel-tools input { width: 38px; height: 16px; padding-left: 6px; margin: 0 2px; background: #2b2b2b; }
.view-transform { width: 139px; height: 17px; margin-left: 4px; }
.scene { flex: 1; min-height: 0; position: relative; background: #858585; overflow: hidden; }
.scene canvas, .scene svg { position: absolute; top: 0; left: 0; width: 100%; height: 100%; }
.scene canvas { object-fit: cover; object-position: left top; }
.axis { font: bold 10px "DejaVu Sans Mono", monospace; }
.hud { font: bold 10px "Liberation Sans", sans-serif; fill: #fff; }
.hud.big { font-size: 12px; }

/* channel box */
.channels { width: 266px; flex: none; border-left: 2px solid #393939; padding: 2px 4px 0 5px; display: flex; flex-direction: column; }
.channels h2 { margin: 0; font-size: 11px; line-height: 18px; padding-left: 1px; color: #c8c8c8; }
.channels > .panel-menus { height: 20px; line-height: 20px; padding-left: 7px; }
.attrs { display: grid; grid-template-columns: 1fr 64px; column-gap: 7px; margin-right: 1px; }
.attrs label { text-align: right; height: 16px; }
.attrs input { height: 16px; background: #2b2b2b; padding-left: 9px; border-bottom: 1px solid #3c3c3c; color: #ddd; }
.history { flex: none; height: 146px; margin-top: 13px; background: #2b2b2b; }
.splitter { width: 86px; height: 2px; margin: 3px auto 8px; border-top: 1px dotted #999; }
.layers { flex: 1; min-height: 0; border: 1px solid #343434; display: flex; flex-direction: column; margin-bottom: 3px; }
.layers .tabs { height: 17px; }
.layers .tab { padding-top: 1px; padding-left: 10px; }
.layers .tab.active { padding-right: 13px; }
.layers .panel-menus { height: 20px; line-height: 20px; padding-left: 9px; }
.layer-tools { display: flex; justify-content: flex-end; gap: 4px; padding: 2px 5px 4px 0; height: 26px; }
.layer-tools button, .layer-tools svg { width: 20px; height: 20px; }
.layer-list { flex: 1; display: flex; flex-direction: column; justify-content: space-between; background: #2b2b2b; margin: 0 3px 3px; border-top: 1px solid #222; }
.layer { display: flex; align-items: center; gap: 4px; height: 20px; padding-left: 3px; background: #5285a6; color: #111; }
.layer button { width: 19px; height: 14px; line-height: 12px; border: 1px solid #3c6684; border-radius: 2px; }
.swatch { width: 15px; height: 14px; }
.hscroll { display: flex; align-items: center; gap: 4px; height: 16px; padding: 0 4px; background: #383838; }
.left, .right { border: 5px solid transparent; }
.left { border-right-color: #ccc; border-left: 0; }
.right { border-left-color: #ccc; border-right: 0; }
.track { flex: 1; height: 10px; }
.thumb { display: block; width: 70%; height: 10px; border-radius: 3px; background: #5d5d5d; }

.side-tabs { width: 10px; flex: none; overflow: hidden; background: #383838; }
.side-tabs button { display: block; writing-mode: vertical-rl; width: 16px; line-height: 16px; height: 102px; background: #383838; color: #aaa; margin-left: -2px; border-bottom: 1px solid #2e2e2e; }
.side-tabs button.active { height: 158px; background: #444; color: #eee; }

/* time slider, range slider, command line */
.row { display: flex; align-items: center; border-top: 2px solid #383838; }
.row > * { flex: none; }
.frame { width: 68px; height: 23px; padding-left: 6px; margin-right: 8px; background: #2b2b2b; border-radius: 2px; color: #ddd; }
.time { height: 37px; padding-left: 8px; }
.time .frame { width: 66px; height: 18px; margin: 2px 8px 0 6px; }
.timeline { flex: 1; min-width: 0; display: flex; height: 28px; background: #2b2b2b; overflow: hidden; }
.now { width: 6px; margin-left: 6px; padding-top: 12px; background: #5d5d5d; color: #fff; flex: none; }
.ticks { flex: 1; display: grid; grid-template-columns: repeat(24, 1fr); margin: 0 -27px 0 25px; }
.tick { height: 28px; padding-left: 1px; line-height: 10px; color: #80857f; background: linear-gradient(#999, #999) 0 100% / 2px 15px no-repeat; }
.playback { display: flex; padding-right: 3px; }
.playback button { width: 23px; height: 22px; }
.playback svg, .range button svg, .command button svg { width: 22px; height: 22px; }
.range { height: 34px; padding-left: 9px; }
.range-bar { flex: 1; min-width: 0; height: 23px; margin-right: 7px; padding: 2px 4px; background: #383838; }
.range-thumb { display: flex; align-items: center; gap: 3px; width: 398px; max-width: 100%; height: 19px; padding: 0 4px; background: #5d5d5d; border-radius: 2px; }
.range-thumb i { width: 12px; height: 12px; border-radius: 3px; background: #999; }
.range-thumb .end { margin-left: auto; }
.outline-caret { width: 12px; margin-left: -2px; }
.outline-caret svg { width: 12px; height: 12px; }
.range select { flex: none; height: 24px; padding-left: 4px; border: 1px solid #505050; border-radius: 2px; color: #ddd; }
.anim { width: 104px; margin: 0 8px 0 5px; }
.charset { width: 102px; margin-left: 6px; }
.range select.charset { border-left: 0; }
.range button { width: 23px; height: 23px; margin-left: 6px; margin-right: 2px; }
.command { height: 34px; padding: 0 1px 0 19px; }
.command label { width: 35px; color: #ddd; font-size: 12px; }
.command input { width: 421px; height: 22px; background: #2b2b2b; border-radius: 2px; }
.grip-v { width: 3px; height: 12px; margin: 0 3px; border-left: 1px dotted #888; }
.result { flex: 1; height: 24px; background: #2b2b2b; }
.command button { width: 22px; height: 22px; margin-left: 4px; }
.help { height: 22px; padding: 8px 0 0 19px; font-family: Roboto, sans-serif; font-size: 10px; color: #bbb; }

/* site mark that floats over the window */
.watermark { position: absolute; right: 16px; bottom: 36px; width: 294px; pointer-events: none; display: flex; flex-direction: column; color: rgba(200, 200, 200, .45); }
.site { font-family: Lato, sans-serif; font-weight: bold; font-size: 31px; line-height: 36px; }
.watermark svg { margin: 6px 0 0 107px; }
.brand { width: 76px; margin-left: 108px; text-align: center; font-family: "DejaVu Sans", sans-serif; font-weight: bold; font-size: 15px; line-height: 18px; color: rgba(160, 160, 160, .6); white-space: nowrap; }
```
FILE: script.js
```js
// frame numbers on the time slider
const ticks = document.getElementById('ticks');
for (let f = 5; f <= 120; f += 5) {
  const t = document.createElement('span');
  t.className = 'tick';
  t.textContent = f;
  ticks.appendChild(t);
}

// image plane: drawn small and blown up so its pixels show
const PX = 6;
const small = document.createElement('canvas');
small.width = 160;
small.height = 74;
const s = small.getContext('2d');
s.scale(1 / PX, 1 / PX);
s.translate(-42, -156);

function shape(d, color) {
  s.fillStyle = color;
  s.fill(new Path2D(d));
}
shape('M0 0H1100V700H0Z', '#545c61');
shape('M218 156C170 250 137 360 136 455C136 510 145 555 157 600H1100V150Z', '#858585');
shape('M372 156C345 200 312 250 297 306C315 322 330 336 350 351C400 385 450 410 490 424C550 446 600 459 660 461C740 460 800 446 850 419C890 385 918 340 922 270C922 220 916 185 911 156Z', '#555');
shape('M1010 440L946 521L1010 553Z', '#555');

const ctx = document.getElementById('plane').getContext('2d');
ctx.imageSmoothingEnabled = false;
ctx.drawImage(small, -3, -5, small.width * PX, small.height * PX);
```
